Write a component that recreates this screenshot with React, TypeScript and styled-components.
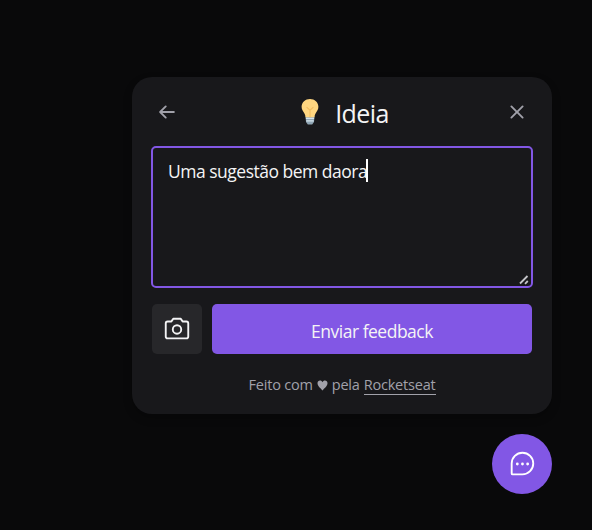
import React from "react";
import styled, { createGlobalStyle } from "styled-components";
import {
  PiArrowLeftBold,
  PiCamera,
  PiChatTeardropDots,
  PiXBold,
} from "react-icons/pi";

const GlobalStyle = createGlobalStyle`
  *, *::before, *::after { box-sizing: border-box; }
  body {
    margin: 0;
    background: #09090a;
    color: #f4f4f5;
    font-family: "Open Sans", "Noto Sans", sans-serif;
    overflow: hidden;
  }
  button { font: inherit; border: 0; padding: 0; cursor: pointer; }
`;

const Page = styled.main`
  height: 530px;
  padding: 0 40px 36px 0;
  display: flex;
  flex-direction: column;
  justify-content: flex-end;
  align-items: flex-end;
  gap: 20px;
`;

const Card = styled.section`
  width: 420px;
  height: 337px;
  padding: 20px 20px 0;
  border-radius: 20px;
  background: #18181b;
  box-shadow: 0 4px 8px rgba(0, 0, 0, 0.25);
  display: flex;
  flex-direction: column;
`;

const Header = styled.header`
  height: 30px;
  display: flex;
  align-items: center;
  justify-content: space-between;
`;

const IconButton = styled.button`
  display: flex;
  width: 30px;
  height: 30px;
  align-items: center;
  justify-content: center;
  background: transparent;
  color: #a1a1aa;
`;

const Title = styled.h1`
  margin: 0;
  display: flex;
  align-items: center;
  gap: 16px;
  padding-left: 6px;
  font-size: 25px;
  line-height: 30px;
  font-weight: 400;
`;

const TitleText = styled.span`
  letter-spacing: -0.6px;
  padding-top: 1px;
`;

const Field = styled.div`
  position: relative;
  height: 142px;
  margin: 19px -1px 0;
  padding: 11px 15px;
  border: 2px solid #8257e5;
  border-radius: 5px;
  display: flex;
  align-items: flex-start;
  font-size: 17.5px;
  line-height: 25px;
  letter-spacing: -0.5px;
  white-space: nowrap;
`;

const Caret = styled.span`
  width: 2px;
  height: 23px;
  margin-left: -1px;
  background: #fff;
`;

const ResizeGrip = styled.svg`
  position: absolute;
  right: 2px;
  bottom: 1px;
`;

const Actions = styled.div`
  display: flex;
  gap: 10px;
  margin-top: 16px;
`;

const CameraButton = styled.button`
  width: 50px;
  height: 50px;
  border-radius: 5px;
  background: #27272a;
  color: #f4f4f5;
  display: flex;
  align-items: center;
  justify-content: center;
`;

const SubmitButton = styled.button`
  flex: 1;
  height: 50px;
  padding-top: 3px;
  border-radius: 5px;
  background: #8257e5;
  color: #f4f4f5;
  && { font-size: 17.5px; }
  letter-spacing: -0.5px;
`;

const Footer = styled.footer`
  display: flex;
  justify-content: center;
  align-items: center;
  gap: 4px;
  margin-top: 20px;
  height: 22px;
  color: #a1a1aa;
  font-size: 14.5px;
  line-height: 20px;
  letter-spacing: -0.2px;
`;

const FooterLink = styled.a`
  height: 20px;
  border-bottom: 1px solid #a1a1aa;
`;

const LauncherButton = styled.button`
  width: 60px;
  height: 60px;
  border-radius: 50%;
  background: #8257e5;
  color: #fff;
  display: flex;
  align-items: center;
  justify-content: center;
`;

const Bulb = () => (
  <svg width="18" height="28" viewBox="0 0 18 28" aria-label="Ideia">
    <path d="M4.500 18.500h9l-.5 5.500-1.800 2.600H6.800L5 24z" fill="#8fa5b4" />
    <path d="M4.900 20.300h8.200M5.300 22.900h7.400" stroke="#d5e3ec" strokeWidth="1.300" />
    <path
      d="M9 1C4.400 1 .6 4.300.6 8.800c0 3 1.500 4.500 2.700 6.400.8 1.300 1 2.200 1.200 4.100h9c.2-1.900.4-2.800 1.200-4.100 1.200-1.900 2.700-3.400 2.700-6.400C17.400 4.300 13.600 1 9 1z"
      fill="#ffd680"
    />
    <path d="M5.600 9.200 9 12.200l3.400-3M9 12.200v7" fill="none" stroke="#f2bd60" strokeWidth="1.100" />
  </svg>
);

const Heart = () => (
  <svg width="11" height="11" viewBox="0 0 11 11" aria-label="amor">
    <path
      d="M5.500 10.400C3.800 8.400.5 6 .5 3.200.5 1.600 1.600.6 3 .6c1.200 0 2 .7 2.500 1.700C6 1.300 6.800.6 8 .6c1.400 0 2.500 1 2.500 2.600 0 2.800-3.300 5.200-5 7.200z"
      fill="#a1a1aa"
    />
  </svg>
);

export default function App() {
  return (
    <>
      <GlobalStyle />
      <Page>
        <Card>
          <Header>
            <IconButton aria-label="Voltar">
              <PiArrowLeftBold size={20} />
            </IconButton>
            <Title>
              <Bulb />
              <TitleText>Ideia</TitleText>
            </Title>
            <IconButton aria-label="Fechar">
              <PiXBold size={20} />
            </IconButton>
          </Header>
          <Field role="textbox" aria-multiline="true">
            <span>Uma sugestão bem daora</span>
            <Caret />
            <ResizeGrip width="10" height="10" viewBox="0 0 10 10">
              <path d="M1 8.500 8.500 1M6 8.800 8.800 6" stroke="#c4c4c8" strokeWidth="1.800" />
            </ResizeGrip>
          </Field>
          <Actions>
            <CameraButton aria-label="Capturar tela">
              <PiCamera size={30} />
            </CameraButton>
            <SubmitButton>Enviar feedback</SubmitButton>
          </Actions>
          <Footer>
            <span>Feito com</span>
            <Heart />
            <span>pela</span>
            <FooterLink>Rocketseat</FooterLink>
          </Footer>
        </Card>
        <LauncherButton aria-label="Abrir feedback">
          <PiChatTeardropDots size={30} />
        </LauncherButton>
      </Page>
    </>
  );
}
